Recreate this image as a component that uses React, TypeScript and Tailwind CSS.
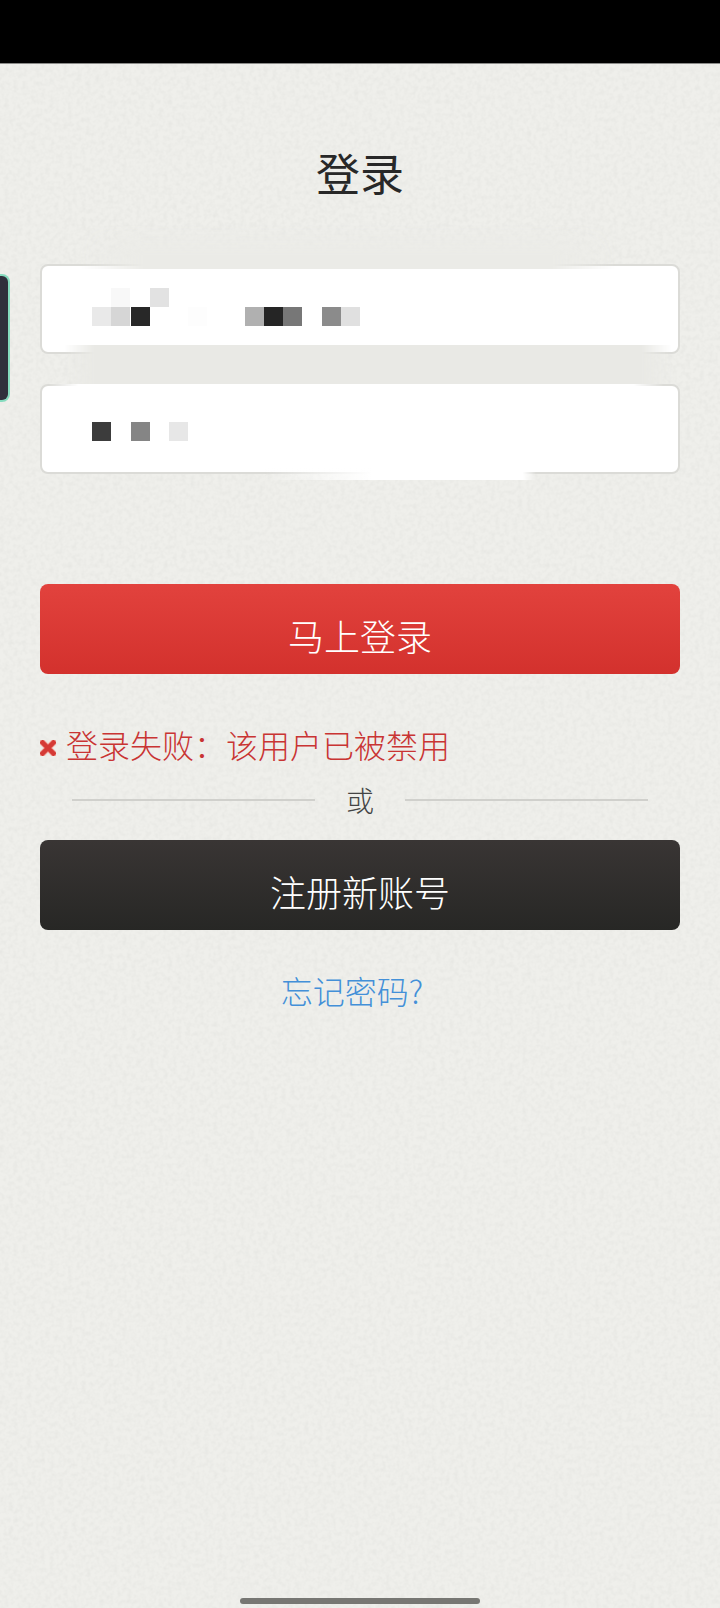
import { useState } from "react"

type Block = { x: number; y: number; fill: string }

const ACCOUNT_BLOCKS: Block[] = [
    { x: 19, y: 0, fill: '#f8f8f8' },
    { x: 58, y: 0, fill: '#e2e2e2' },
    { x: 0, y: 19, fill: '#e9e9e9' },
    { x: 19, y: 19, fill: '#d6d6d6' },
    { x: 39, y: 19, fill: '#282828' },
    { x: 96, y: 19, fill: '#fdfdfd' },
    { x: 153, y: 19, fill: '#b0b0b0' },
    { x: 172, y: 19, fill: '#252525' },
    { x: 191, y: 19, fill: '#777777' },
    { x: 230, y: 19, fill: '#8b8b8b' },
    { x: 249, y: 19, fill: '#e0e0e0' },
]

const PASSWORD_BLOCKS: Block[] = [
    { x: 0, y: 18, fill: '#3c3c3c' },
    { x: 39, y: 18, fill: '#858585' },
    { x: 77, y: 18, fill: '#e7e7e7' },
]

function Mosaic({ blocks }: { blocks: Block[] }) {
    return (
        <svg width="270" height="38" viewBox="0 0 270 38" shapeRendering="crispEdges" aria-hidden="true">
            {blocks.map(b => (
                <rect key={`${b.x}-${b.y}`} x={b.x} y={b.y} width="19" height="19" fill={b.fill} />
            ))}
        </svg>
    )
}

function Paper() {
    return (
        <svg className="absolute inset-0 h-full w-full pointer-events-none" aria-hidden="true">
            <filter id="paper" x="0" y="0" width="100%" height="100%">
                <feTurbulence type="fractalNoise" baseFrequency="0.22" numOctaves="2" seed="4" />
                <feColorMatrix values="0 0 0 0 0.45  0 0 0 0 0.46  0 0 0 0 0.44  0.24 0 0 0 -0.09" />
            </filter>
            <rect width="100%" height="100%" filter="url(#paper)" />
        </svg>
    )
}

const field = "block h-[90px] w-full rounded-lg border-2 border-[#dbdbd7] bg-white px-12 text-[32px] text-[#282828] outline-none"
const button = "block h-[90px] w-full rounded-lg bg-linear-to-b pt-3 text-4xl text-white cursor-pointer"

export default function App() {
    const [account, setAccount] = useState('')
    const [password, setPassword] = useState('')

    return (
        <div className="relative min-h-screen overflow-hidden bg-[#efefeb] font-light font-['Noto_Sans_CJK_SC',sans-serif]">
            <Paper />
            <header className="relative h-16 border-b border-[#8a8a88] bg-black" />

            {/* floating side handle */}
            <div className="absolute top-[274px] left-0 h-[128px] w-[10px] rounded-r-lg border-2 border-l-0 border-[#86dcbf] bg-[#30303c]" />

            <main className="relative px-10">
                <form onSubmit={e => e.preventDefault()}>
                    <h1 className="pt-19 mb-15 text-center text-[44px] leading-[64px] font-normal text-[#282828]">登录</h1>

                    <div className="relative">
                        <input
                            type="text"
                            aria-label="用户名"
                            autoComplete="off"
                            value={account}
                            onChange={e => setAccount(e.target.value)}
                            className={field}
                        />
                        <div className="absolute -top-10 left-10 right-16 h-[45px] bg-[#ebebe7] mask-x-from-88% mask-x-to-100% mask-t-from-30% mask-t-to-100% pointer-events-none" />
                        <div className="absolute top-[81px] left-6 right-2 h-[39px] bg-[#e9e9e5] mask-x-from-95% mask-x-to-100% pointer-events-none" />
                        <div className="absolute top-6 left-13 pointer-events-none">
                            <Mosaic blocks={ACCOUNT_BLOCKS} />
                        </div>
                    </div>

                    <div className="relative mt-[30px]">
                        <input
                            type="password"
                            aria-label="密码"
                            autoComplete="off"
                            value={password}
                            onChange={e => setPassword(e.target.value)}
                            className={field}
                        />
                        <div className="absolute top-0 left-2 right-4 h-2 bg-white mask-x-from-95% mask-x-to-100% pointer-events-none" />
                        <div className="absolute top-[84px] left-56 right-36 h-3 bg-linear-to-r from-transparent via-white via-40% to-white mask-r-from-95% mask-r-to-100% pointer-events-none" />
                        <div className="absolute top-5 left-13 pointer-events-none">
                            <Mosaic blocks={PASSWORD_BLOCKS} />
                        </div>
                    </div>

                    <button type="submit" className={`${button} mt-[110px] from-[#e2423d] to-[#d3312d]`}>
                        马上登录
                    </button>
                </form>

                <p role="alert" className="mt-[46px] flex h-12 items-center gap-2.5 text-[32px] leading-12 text-[#c93433]">
                    <svg width="16" height="16" viewBox="0 0 16 16" className="mt-2 shrink-0" aria-hidden="true">
                        <path d="M0 0 16 16M16 0 0 16" stroke="#f0aaa2" strokeWidth="6.5" />
                        <path d="M1 1 15 15M15 1 1 15" stroke="#d53a35" strokeWidth="4.5" />
                    </svg>
                    登录失败：该用户已被禁用
                </p>

                <div className="mt-3 flex h-10 items-center px-8">
                    <span className="h-0.5 flex-1 bg-[#d0d0cc]" />
                    <span className="w-[90px] text-center text-[28px] leading-10 text-[#444444]">或</span>
                    <span className="h-0.5 flex-1 bg-[#d0d0cc]" />
                </div>

                <button type="button" className={`${button} mt-5 from-[#393534] to-[#272725]`}>
                    注册新账号
                </button>

                <div className="mt-10 pr-4 text-center text-[32px] leading-10">
                    <a href="#forgot" className="text-[#4390d8]">忘记密码?</a>
                </div>
            </main>

            {/* system gesture bar */}
            <div className="absolute inset-x-0 bottom-1 mx-auto h-1.5 w-60 rounded-full bg-[#777773]" />
        </div>
    )
}
